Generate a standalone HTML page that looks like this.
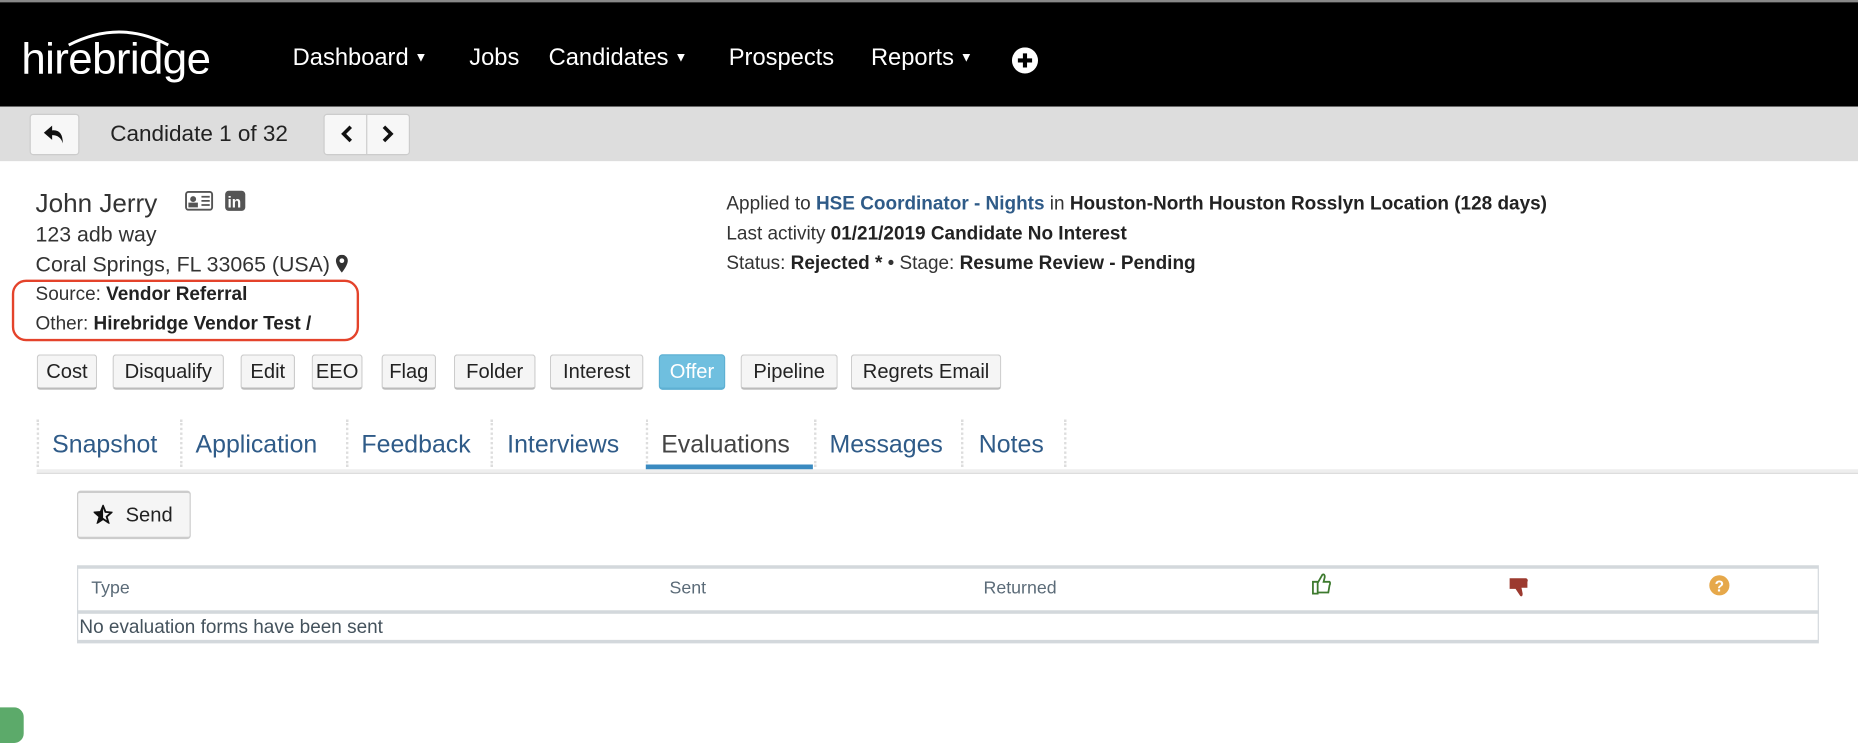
<!DOCTYPE html>
<html><head><meta charset="utf-8"><style>
*{box-sizing:border-box;margin:0;padding:0}
body{width:1858px;height:724px;overflow:hidden;background:#fff;font-family:"Liberation Sans",sans-serif;color:#333}
#w{position:absolute;left:0;top:0;width:1568px;height:611px;transform:scale(1.18495);transform-origin:0 0}
.a{position:absolute;white-space:nowrap}
.top{position:absolute;left:0;top:0;width:1568px;height:90px;background:#000;border-top:2px solid #888}
.nav{color:#fff;font-size:20px;top:38px}
.car{font-size:11px;vertical-align:3px;margin-left:5px}
.gb{position:absolute;left:0;top:90px;width:1568px;height:46px;background:#ddd}
.btn{position:absolute;border:1px solid #ccc;border-bottom:2px solid #bbb;border-radius:3px;background:#f5f5f5;font-size:17px;color:#222;text-align:center;line-height:28px;height:30px;top:299px}
.tab{position:absolute;top:364px;font-size:21px;color:#2f5b88}
.sep{position:absolute;top:354px;height:40px;border-left:2px dotted #ddd}
b{color:#222}
.th{position:absolute;top:488px;font-size:15px;color:#5b6b78}
</style></head><body><div id="w">
<div class="top"></div>
<div class="a" style="left:18px;top:29px;color:#fff;font-size:37px;letter-spacing:-0.5px">hirebridge</div>
<svg class="a" style="left:56px;top:22px" width="90" height="20"><path d="M2 16 Q45 -6 86 16" stroke="#fff" stroke-width="2.5" fill="none"/></svg>
<div class="a nav" style="left:247px">Dashboard<span class="car">▼</span></div>
<div class="a nav" style="left:396px">Jobs</div>
<div class="a nav" style="left:463px">Candidates<span class="car">▼</span></div>
<div class="a nav" style="left:615px">Prospects</div>
<div class="a nav" style="left:735px">Reports<span class="car">▼</span></div>
<svg class="a" style="left:854px;top:40px" width="22" height="22"><circle cx="11" cy="11" r="11" fill="#fff"/><path d="M11 5v12M5 11h12" stroke="#000" stroke-width="3.5"/></svg>
<div class="gb"></div>
<div class="a" style="left:25px;top:96px;width:42px;height:35px;background:#f7f7f7;border:1px solid #ccc;border-radius:3px"></div>
<svg class="a" style="left:36px;top:104px" width="20" height="18"><path d="M8 2 L1 8 L8 14 V10 Q15 10 17 17 Q17 5 8 6 Z" fill="#111"/></svg>
<div class="a" style="left:93px;top:103px;font-size:19px;color:#222">Candidate 1 of 32</div>
<div class="a" style="left:273px;top:96px;width:73px;height:35px;background:#f7f7f7;border:1px solid #ccc;border-radius:3px"></div>
<div class="a" style="left:309px;top:97px;height:33px;border-left:1px solid #ccc"></div>
<svg class="a" style="left:284px;top:104px" width="60" height="18"><path d="M12 3 L6 9 L12 15" stroke="#111" stroke-width="3" fill="none"/><path d="M40 3 L46 9 L40 15" stroke="#111" stroke-width="3" fill="none"/></svg>
<div class="a" style="left:30px;top:159px;font-size:22px">John Jerry</div>
<svg class="a" style="left:156px;top:160px" width="55" height="20"><rect x="1" y="2" width="22" height="15" rx="2" fill="none" stroke="#555" stroke-width="1.6"/><circle cx="7" cy="8" r="2.5" fill="#555"/><rect x="3" y="11" width="8" height="4" fill="#555"/><path d="M14 6h7M14 9.5h7M14 13h7" stroke="#555" stroke-width="1.5"/><rect x="34" y="1" width="17" height="17" rx="3" fill="#555"/><text x="36" y="15" font-size="13" font-weight="bold" fill="#fff" font-family="Liberation Sans">in</text></svg>
<div class="a" style="left:30px;top:188px;font-size:18px">123 adb way</div>
<div class="a" style="left:30px;top:213px;font-size:18px">Coral Springs, FL 33065 (USA) <svg width="11" height="15" style="vertical-align:-1px"><path d="M5.5 0 A5 5 0 0 1 10.5 5 C10.5 9 5.5 15 5.5 15 C5.5 15 .5 9 .5 5 A5 5 0 0 1 5.5 0Z M5.5 3 A2 2 0 1 0 5.5 7 A2 2 0 1 0 5.5 3Z" fill="#333" fill-rule="evenodd"/></svg></div>
<div class="a" style="left:10px;top:236px;width:293px;height:52px;border:2.5px solid #e4432b;border-radius:12px"></div>
<div class="a" style="left:30px;top:240px;font-size:16px">Source: <b>Vendor Referral</b></div>
<div class="a" style="left:30px;top:265px;font-size:16px">Other: <b>Hirebridge Vendor Test /</b></div>
<div class="a" style="left:613px;top:164px;font-size:16px">Applied to <b style="color:#2f5b88">HSE Coordinator - Nights</b> in <b>Houston-North Houston Rosslyn Location (128 days)</b></div>
<div class="a" style="left:613px;top:189px;font-size:16px">Last activity <b>01/21/2019 Candidate No Interest</b></div>
<div class="a" style="left:613px;top:214px;font-size:16px">Status: <b>Rejected *</b> • Stage: <b>Resume Review - Pending</b></div>
<div class="btn" style="left:31px;width:51px">Cost</div>
<div class="btn" style="left:95px;width:94px">Disqualify</div>
<div class="btn" style="left:203px;width:46px">Edit</div>
<div class="btn" style="left:263px;width:43px">EEO</div>
<div class="btn" style="left:322px;width:46px">Flag</div>
<div class="btn" style="left:383px;width:69px">Folder</div>
<div class="btn" style="left:464px;width:79px">Interest</div>
<div class="btn" style="left:556px;width:56px;background:#6fbfdf;border-color:#5eb0d3;color:#fff">Offer</div>
<div class="btn" style="left:625px;width:82px">Pipeline</div>
<div class="btn" style="left:718px;width:127px">Regrets Email</div>
<div class="sep" style="left:31px"></div><div class="sep" style="left:152px"></div><div class="sep" style="left:292px"></div><div class="sep" style="left:414px"></div><div class="sep" style="left:545px"></div><div class="sep" style="left:687px"></div><div class="sep" style="left:811px"></div><div class="sep" style="left:898px"></div>
<div class="tab" style="left:44px">Snapshot</div>
<div class="tab" style="left:165px">Application</div>
<div class="tab" style="left:305px">Feedback</div>
<div class="tab" style="left:428px">Interviews</div>
<div class="tab" style="left:558px;color:#444">Evaluations</div>
<div class="tab" style="left:700px">Messages</div>
<div class="tab" style="left:826px">Notes</div>
<div class="a" style="left:31px;top:396px;width:1537px;height:4px;background:#eee;border-bottom:1px solid #ddd"></div>
<div class="a" style="left:545px;top:392px;width:141px;height:4px;background:#3a8ac0"></div>
<div class="a" style="left:65px;top:414px;width:96px;height:41px;background:#f5f5f5;border:1px solid #ccc;border-top:2px solid #ccc;border-bottom:2px solid #ccc;border-radius:3px"></div>
<svg class="a" style="left:79px;top:426px" width="16" height="16"><path d="M8 1 L10 6 L15 6.5 L11 10 L12.5 15 L8 12 L3.5 15 L5 10 L1 6.5 L6 6 Z" fill="none" stroke="#111" stroke-width="1.6"/><path d="M8 1 L6 6 L1 6.5 L5 10 L3.5 15 L8 12Z" fill="#111"/></svg>
<div class="a" style="left:106px;top:425px;font-size:17px;color:#222">Send</div>
<div class="a" style="left:65px;top:477px;width:1470px;height:66px;border:1px solid #d3d8dc;border-top:3px solid #d3d8dc;border-bottom:3px solid #d3d8dc"></div>
<div class="a" style="left:65px;top:515px;width:1470px;height:3px;background:#d3d8dc"></div>
<div class="th" style="left:77px">Type</div>
<div class="th" style="left:565px">Sent</div>
<div class="th" style="left:830px">Returned</div>
<svg class="a" style="left:1106px;top:483px" width="18" height="19"><path d="M2 8h4v10H2z M6 9 L10 2 Q12 1 12 4 L11 8 H16 Q17 9 16 11 L15 17 H6" fill="none" stroke="#3d7a2e" stroke-width="1.5"/></svg>
<svg class="a" style="left:1273px;top:487px" width="18" height="19"><path d="M1 1h5v9H1z M6 1 H15 Q17 2 16 4 L16 9 H11 L12 14 Q12 17 10 16 L6 10Z" fill="#9c3a2f"/></svg>
<svg class="a" style="left:1442px;top:485px" width="18" height="18"><circle cx="9" cy="9" r="8.5" fill="#e6a84a"/><text x="5" y="14" font-size="13" font-weight="bold" fill="#fff" font-family="Liberation Sans">?</text></svg>
<div class="a" style="left:67px;top:521px;font-size:16px;color:#44525c">No evaluation forms have been sent</div>
<div class="a" style="left:-8px;top:597px;width:28px;height:30px;border-radius:8px;background:#5caa6a"></div>
</div></body></html>
